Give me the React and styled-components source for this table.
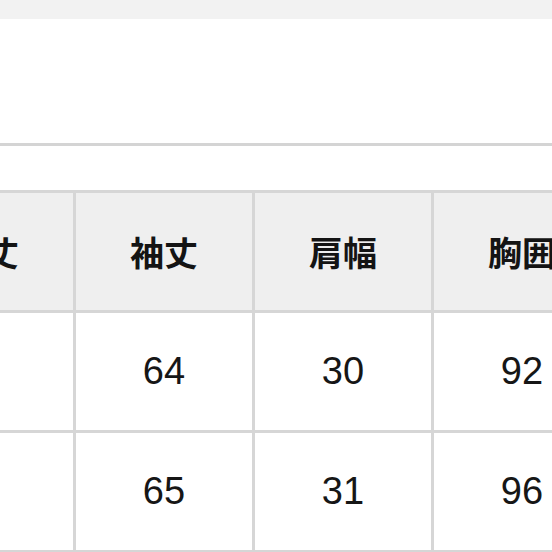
import styled, { createGlobalStyle } from 'styled-components';

const GlobalStyle = createGlobalStyle`
  html, body {
    margin: 0;
    padding: 0;
    background: #ffffff;
    overflow: hidden;
  }
  body {
    font-family: "Liberation Sans", "Noto Sans CJK JP", sans-serif;
    color: #141414;
  }
`;

const Page = styled.div`
  width: 552px;
  height: 552px;
  overflow: hidden;
  display: flex;
  flex-direction: column;
`;

const TopBar = styled.div`
  height: 19px;
  background: #f2f2f2;
  flex-shrink: 0;
`;

const Blank = styled.div`
  height: ${(p) => p.$h}px;
  flex-shrink: 0;
`;

const Divider = styled.div`
  height: 3px;
  background: #d4d4d4;
  flex-shrink: 0;
`;

const SizeTable = styled.table`
  border-collapse: collapse;
  table-layout: fixed;
  margin-left: -106px;
  width: ${5 * 179 + 3}px;
  border: 3px solid #d6d6d6;
  flex-shrink: 0;
`;

const HeadCell = styled.th`
  height: 117px;
  padding: 0;
  border: 3px solid #d6d6d6;
  background: #efefef;
  font-family: "Noto Sans CJK JP", sans-serif;
  font-weight: 700;
  font-size: 34px;
  text-align: center;
  vertical-align: middle;
  color: #141414;
`;

const Cell = styled.td`
  height: 117px;
  padding: 0;
  border: 3px solid #d6d6d6;
  background: #ffffff;
  font-family: "Liberation Sans", Arial, sans-serif;
  font-size: 38px;
  text-align: center;
  vertical-align: middle;
  color: #161616;
`;

const headers = ['着丈', '袖丈', '肩幅', '胸囲', '裄丈'];
const rows = [
  ['', '64', '30', '92', '78'],
  ['', '65', '31', '96', '80'],
];

export default function App() {
  return (
    <>
      <GlobalStyle />
      <Page>
        <TopBar />
        <Blank $h={124} />
        <Divider />
        <Blank $h={44} />
        <SizeTable>
          <thead>
            <tr>
              {headers.map((h) => (
                <HeadCell key={h}>{h}</HeadCell>
              ))}
            </tr>
          </thead>
          <tbody>
            {rows.map((r, i) => (
              <tr key={i}>
                {r.map((v, j) => (
                  <Cell key={j}>{v}</Cell>
                ))}
              </tr>
            ))}
          </tbody>
        </SizeTable>
      </Page>
    </>
  );
}
